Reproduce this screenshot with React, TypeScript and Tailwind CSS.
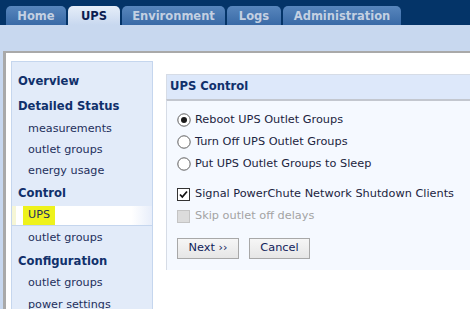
import React from "react";

// Network management card — UPS control page.

const tabs = [
  { label: "Home", w: "w-[60px]" },
  { label: "UPS", w: "w-[52px]", active: true },
  { label: "Environment", w: "w-[103px]" },
  { label: "Logs", w: "w-[54px]" },
  { label: "Administration", w: "w-[118px]" },
];

type NavItem = { label: string; kind: "head" | "link" | "current"; h: string };

const nav: NavItem[] = [
  { label: "Overview", kind: "head", h: "h-[26px]" },
  { label: "Detailed Status", kind: "head", h: "h-[23px]" },
  { label: "measurements", kind: "link", h: "h-[22px]" },
  { label: "outlet groups", kind: "link", h: "h-[21px]" },
  { label: "energy usage", kind: "link", h: "h-[21px]" },
  { label: "Control", kind: "head", h: "h-[24px]" },
  { label: "UPS", kind: "current", h: "h-[20px]" },
  { label: "outlet groups", kind: "link", h: "h-[24px]" },
  { label: "Configuration", kind: "head", h: "h-[23px]" },
  { label: "outlet groups", kind: "link", h: "h-[21px]" },
  { label: "power settings", kind: "link", h: "h-[22px]" },
];

function Radio({ checked }: { checked?: boolean }) {
  return (
    <svg width="14" height="14" viewBox="0 0 14 14" className="shrink-0">
      <circle cx="7" cy="7" r="6.2" fill="#fff" stroke="#5f5f5f" strokeWidth="1" />
      {checked && <circle cx="7" cy="7" r="3" fill="#1a1a1a" />}
    </svg>
  );
}

function Check({ checked, disabled }: { checked?: boolean; disabled?: boolean }) {
  return (
    <svg width="13" height="13" viewBox="0 0 13 13" className="shrink-0">
      <rect
        x="0.5"
        y="0.5"
        width="12"
        height="12"
        fill={disabled ? "#dcdcdc" : "#fff"}
        stroke={disabled ? "#c4c4c4" : "#333"}
      />
      {checked && (
        <path d="M3 6.5 L5.3 9 L10 3.5" fill="none" stroke="#111" strokeWidth="1.8" />
      )}
    </svg>
  );
}

export default function App() {
  return (
    <div className="h-[309px] w-[470px] overflow-hidden bg-[#c8d8ef] font-['DejaVu_Sans','Liberation_Sans',sans-serif]">
      {/* barra de abas */}
      <div className="flex h-[25px] items-end gap-[2px] bg-[#043468] pl-[6px]">
        {tabs.map((t) => (
          <div
            key={t.label}
            className={`flex h-[19px] ${t.w} shrink-0 items-center justify-center rounded-t-[5px] pt-[2px] text-[11.5px] font-bold ${
              t.active
                ? "bg-linear-to-b from-[#e6eef9] to-[#c8d8ef] text-[#0c1d50]"
                : "bg-linear-to-b from-[#5886bd] to-[#396aa6] text-[#c3d0e2]"
            }`}
          >
            {t.label}
          </div>
        ))}
      </div>
      <div className="h-[26px]" />

      <div className="ml-[3px] flex h-full gap-[13px] border-t-[2px] border-l-[3px] border-[#a9a9a9] bg-white pt-[8px] pl-[5px]">
        {/* menu lateral */}
        <div className="w-[142px] shrink-0 border border-[#c5d6ee] bg-[#e2ebf9] pt-[7px]">
          {nav.map((n, i) =>
            n.kind === "head" ? (
              <div
                key={i}
                className={`flex ${n.h} items-center pl-[6px] text-[11.6px] font-bold text-[#10306b]`}
              >
                {n.label}
              </div>
            ) : n.kind === "current" ? (
              <div key={i} className={`${n.h} border-b border-[#c5d6ee]`}>
                <div className="flex h-[19px] items-center border-l-[4px] border-[#f6f6d6] bg-linear-to-r from-white via-white via-85% to-[#e8eefa] pl-[7px]">
                  <span className="bg-[#eef21c] px-[5px] py-[1px] text-[11.2px] text-[#1e2f5c]">
                    {n.label}
                  </span>
                </div>
              </div>
            ) : (
              <div
                key={i}
                className={`flex ${n.h} items-center pl-[16px] text-[11.2px] text-[#1e2f5c]`}
              >
                {n.label}
              </div>
            ),
          )}
        </div>

        {/* painel principal */}
        <div className="mt-[13px] w-[400px] shrink-0 self-start">
          <div className="flex h-[25px] items-center border-t border-l border-[#d6dce6] bg-[#dde8fa] pl-[3px] text-[11.6px] font-bold text-[#10306b]">
            UPS Control
          </div>
          <div className="border-t-[2px] border-l border-t-[#c3c7cf] border-l-[#d6dce6] bg-[#f5f9ff] pt-[8px] pb-[11px] pl-[10px] text-[11.3px] text-[#1b2440]">
            {[
              ["Reboot UPS Outlet Groups", true],
              ["Turn Off UPS Outlet Groups", false],
              ["Put UPS Outlet Groups to Sleep", false],
            ].map(([label, on]) => (
              <div key={label as string} className="flex h-[22px] items-center gap-[4px]">
                <Radio checked={on as boolean} />
                <span>{label}</span>
              </div>
            ))}
            <div className="mt-[8px] flex h-[22px] items-center gap-[5px]">
              <Check checked />
              <span>Signal PowerChute Network Shutdown Clients</span>
            </div>
            <div className="flex h-[22px] items-center gap-[5px] text-[#a3a3a3]">
              <Check disabled />
              <span>Skip outlet off delays</span>
            </div>
            <div className="mt-[11px] flex gap-[10px]">
              <button
                type="button"
                className="h-[21px] w-[62px] border border-[#a8a8a8] bg-linear-to-b from-[#f6f6f6] to-[#e6e6e6] text-[11.3px] text-[#10225a]"
              >
                Next ››
              </button>
              <button
                type="button"
                className="h-[21px] w-[61px] border border-[#a8a8a8] bg-linear-to-b from-[#f6f6f6] to-[#e6e6e6] text-[11.3px] text-[#10225a]"
              >
                Cancel
              </button>
            </div>
          </div>
        </div>
      </div>
    </div>
  );
}
